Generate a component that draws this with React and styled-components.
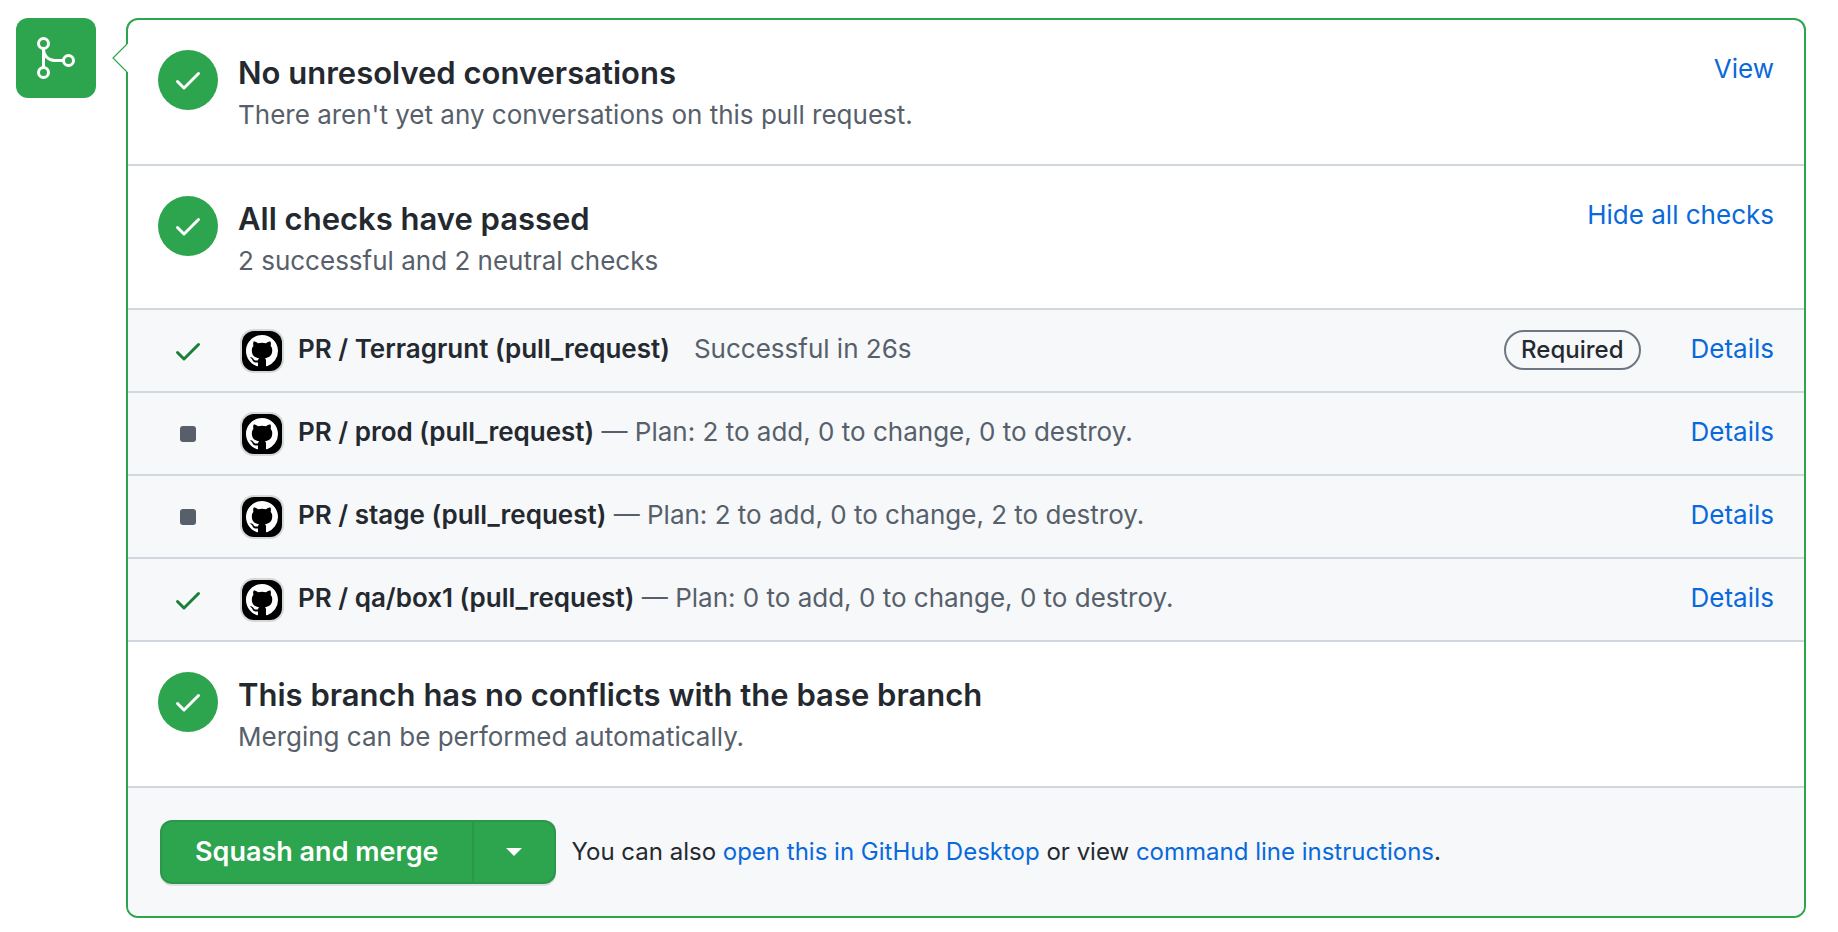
import React from 'react';
import styled, { createGlobalStyle } from 'styled-components';

const GlobalStyle = createGlobalStyle`
  *, *::before, *::after { box-sizing: border-box; }
  body {
    margin: 0;
    background: #ffffff;
    color: #24292f;
    font-family: Inter, "Liberation Sans", sans-serif;
    font-size: 26px;
    line-height: 38px;
  }
`;

const Page = styled.main`
  display: flex;
  align-items: flex-start;
  gap: 30px;
  padding: 18px 32px 14px 16px;
`;

const MergeBadge = styled.div`
  flex: none;
  width: 80px;
  height: 80px;
  border-radius: 12px;
  background: #2da44e;
`;

const Panel = styled.section`
  position: relative;
  flex: 1;
  min-width: 0;
  border: 2px solid #2da44e;
  border-radius: 12px;
  background: #ffffff;
`;

const Pointer = styled.svg`
  position: absolute;
  top: 24px;
  left: -16px;
  width: 16px;
  height: 28px;
`;

const StatusSection = styled.div`
  display: flex;
  align-items: flex-start;
  gap: 20px;
  min-height: ${(p) => (p.$withList ? 144 : 146)}px;
  padding: 30px 30px 20px;
  border-bottom: 2px solid #d0d7de;
`;

const StatusCircle = styled.div`
  display: flex;
  flex: none;
  align-items: center;
  justify-content: center;
  width: 60px;
  height: 60px;
  border-radius: 50%;
  background: #2da44e;
  color: #ffffff;
`;

const StatusText = styled.div`
  flex: 1;
  min-width: 0;
  padding-top: 2px;
`;

const Title = styled.h3`
  margin: 0 0 2px;
  font-size: 31px;
  font-weight: 600;
  line-height: 42px;
`;

const Subtitle = styled.p`
  margin: 0;
  color: #57606a;
`;

const Link = styled.a`
  color: #0969da;
  text-decoration: none;
  white-space: nowrap;

  &:hover { text-decoration: underline; }
`;

const ToggleButton = styled.button`
  padding: 0;
  border: 0;
  background: none;
  color: #0969da;
  font: inherit;
  white-space: nowrap;
  cursor: pointer;
`;

const CheckList = styled.ul`
  margin: 0;
  padding: 0;
  list-style: none;
`;

const CheckRow = styled.li`
  display: flex;
  align-items: flex-start;
  padding: 20px 30px;
  border-bottom: 2px solid #d0d7de;
  background: #f6f8fa;
`;

const CheckState = styled.div`
  display: flex;
  flex: none;
  align-items: center;
  justify-content: center;
  width: 60px;
  height: 41px;
  color: #1a7f37;
`;

const NeutralMark = styled.span`
  width: 16px;
  height: 16px;
  border-radius: 3px;
  background: #57606a;
`;

const Avatar = styled.svg`
  flex: none;
  width: 40px;
  height: 40px;
  margin: 1px 16px 0 24px;
  border-radius: 12px;
  background: #000000;
  box-shadow: 0 0 0 2px rgba(27, 31, 36, 0.15);
`;

const CheckText = styled.div`
  flex: 1;
  min-width: 0;
  color: #57606a;
`;

const CheckName = styled.strong`
  color: #24292f;
  font-weight: 600;
`;

const Duration = styled.span`
  margin-left: 24px;
`;

const RequiredLabel = styled.span`
  flex: none;
  height: 40px;
  margin-right: 50px;
  padding: 0 15px;
  border: 2px solid #6e7781;
  border-radius: 20px;
  color: #24292f;
  font-size: 24px;
  font-weight: 500;
  line-height: 36px;
`;

const Footer = styled.footer`
  display: flex;
  align-items: center;
  gap: 16px;
  padding: 32px;
  border-radius: 0 0 10px 10px;
  background: #f6f8fa;
  font-size: 24px;
`;

const ButtonGroup = styled.div`
  display: flex;
  flex: none;
  border-radius: 12px;
  box-shadow: 0 2px 0 rgba(27, 31, 36, 0.1);
`;

const MergeButton = styled.button`
  height: 64px;
  padding: 0 33px;
  border: 2px solid #2c974b;
  border-radius: 12px 0 0 12px;
  background: #2da44e;
  color: #ffffff;
  font: inherit;
  font-size: 27px;
  font-weight: 600;
  white-space: nowrap;
  cursor: pointer;
`;

const MenuButton = styled(MergeButton)`
  display: flex;
  align-items: center;
  justify-content: center;
  width: 82px;
  padding: 0;
  border-left: 0;
  border-radius: 0 12px 12px 0;
`;

const FooterText = styled.p`
  margin: 0;
`;

function CheckIcon() {
  return (
    <svg width="32" height="32" viewBox="0 0 16 16" fill="currentColor" aria-hidden="true">
      <path
        fillRule="evenodd"
        d="M13.78 4.22a.75.75 0 010 1.06l-7.25 7.25a.75.75 0 01-1.06 0L2.22 9.28a.75.75 0 011.06-1.06L6 10.94l6.72-6.72a.75.75 0 011.06 0z"
      />
    </svg>
  );
}

function MergeIcon() {
  return (
    <svg width="80" height="80" viewBox="0 0 80 80" fill="none" stroke="#ffffff" strokeWidth="3" aria-hidden="true">
      <circle cx="27.5" cy="25.5" r="5" />
      <circle cx="27.5" cy="54.5" r="5" />
      <circle cx="52.5" cy="42.5" r="5" />
      <path d="M27.5 30.5v19M27.5 31.5c0 6 5 11 11 11h9" />
    </svg>
  );
}

function GitHubAvatar() {
  return (
    <Avatar viewBox="0 0 20 20" role="img" aria-label="GitHub">
      <path
        transform="translate(2 2)"
        fill="#ffffff"
        fillRule="evenodd"
        d="M8 0C3.58 0 0 3.58 0 8c0 3.54 2.29 6.53 5.47 7.59.4.07.55-.17.55-.38 0-.19-.01-.82-.01-1.49-2.01.37-2.53-.49-2.69-.94-.09-.23-.48-.94-.82-1.13-.28-.15-.68-.52-.01-.53.63-.01 1.08.58 1.23.82.72 1.21 1.87.87 2.33.66.07-.52.28-.87.51-1.07-1.78-.2-3.64-.89-3.64-3.95 0-.87.31-1.59.82-2.15-.08-.2-.36-1.02.08-2.12 0 0 .67-.21 2.2.82.64-.18 1.32-.27 2-.27.68 0 1.36.09 2 .27 1.53-1.04 2.2-.82 2.2-.82.44 1.1.16 1.92.08 2.12.51.56.82 1.27.82 2.15 0 3.07-1.87 3.75-3.65 3.95.29.25.54.73.54 1.48 0 1.07-.01 1.93-.01 2.2 0 .21.15.46.55.38A8.013 8.013 0 0016 8c0-4.42-3.58-8-8-8z"
      />
    </Avatar>
  );
}

function Status({ title, subtitle, action, withList }) {
  return (
    <StatusSection $withList={withList}>
      <StatusCircle>
        <CheckIcon />
      </StatusCircle>
      <StatusText>
        <Title>{title}</Title>
        <Subtitle>{subtitle}</Subtitle>
      </StatusText>
      {action}
    </StatusSection>
  );
}

const checks = [
  { name: 'PR / Terragrunt (pull_request)', passed: true, duration: 'Successful in 26s', required: true },
  { name: 'PR / prod (pull_request)', passed: false, plan: 'Plan: 2 to add, 0 to change, 0 to destroy.' },
  { name: 'PR / stage (pull_request)', passed: false, plan: 'Plan: 2 to add, 0 to change, 2 to destroy.' },
  { name: 'PR / qa/box1 (pull_request)', passed: true, plan: 'Plan: 0 to add, 0 to change, 0 to destroy.' },
];

export default function App() {
  return (
    <>
      <GlobalStyle />
      <Page>
        <MergeBadge>
          <MergeIcon />
        </MergeBadge>
        <Panel>
          <Pointer viewBox="0 0 16 28" aria-hidden="true">
            <path d="M16 0H14.500L1 14L14.500 28H16Z" fill="#ffffff" />
            <path d="M15 0L1 14L15 28" fill="none" stroke="#2da44e" strokeWidth="1.200" />
          </Pointer>
          <Status
            title="No unresolved conversations"
            subtitle="There aren't yet any conversations on this pull request."
            action={<Link href="#conversations">View</Link>}
          />
          <Status
            withList
            title="All checks have passed"
            subtitle="2 successful and 2 neutral checks"
            action={<ToggleButton type="button">Hide all checks</ToggleButton>}
          />
          <CheckList>
            {checks.map((check) => (
              <CheckRow key={check.name}>
                <CheckState>{check.passed ? <CheckIcon /> : <NeutralMark />}</CheckState>
                <GitHubAvatar />
                <CheckText>
                  <CheckName>{check.name}</CheckName>
                  {check.duration && <Duration>{check.duration}</Duration>}
                  {check.plan && ` — ${check.plan}`}
                </CheckText>
                {check.required && <RequiredLabel>Required</RequiredLabel>}
                <Link href="#details">Details</Link>
              </CheckRow>
            ))}
          </CheckList>
          <Status
            title="This branch has no conflicts with the base branch"
            subtitle="Merging can be performed automatically."
          />
          <Footer>
            <ButtonGroup>
              <MergeButton type="button">Squash and merge</MergeButton>
              <MenuButton type="button" aria-label="Select merge method">
                <svg width="16" height="8" viewBox="0 0 16 8" aria-hidden="true">
                  <path d="M0 0H16L8 8Z" fill="#ffffff" />
                </svg>
              </MenuButton>
            </ButtonGroup>
            <FooterText>
              You can also <Link href="#desktop">open this in GitHub Desktop</Link> or view{' '}
              <Link href="#command-line">command line instructions</Link>.
            </FooterText>
          </Footer>
        </Panel>
      </Page>
    </>
  );
}
